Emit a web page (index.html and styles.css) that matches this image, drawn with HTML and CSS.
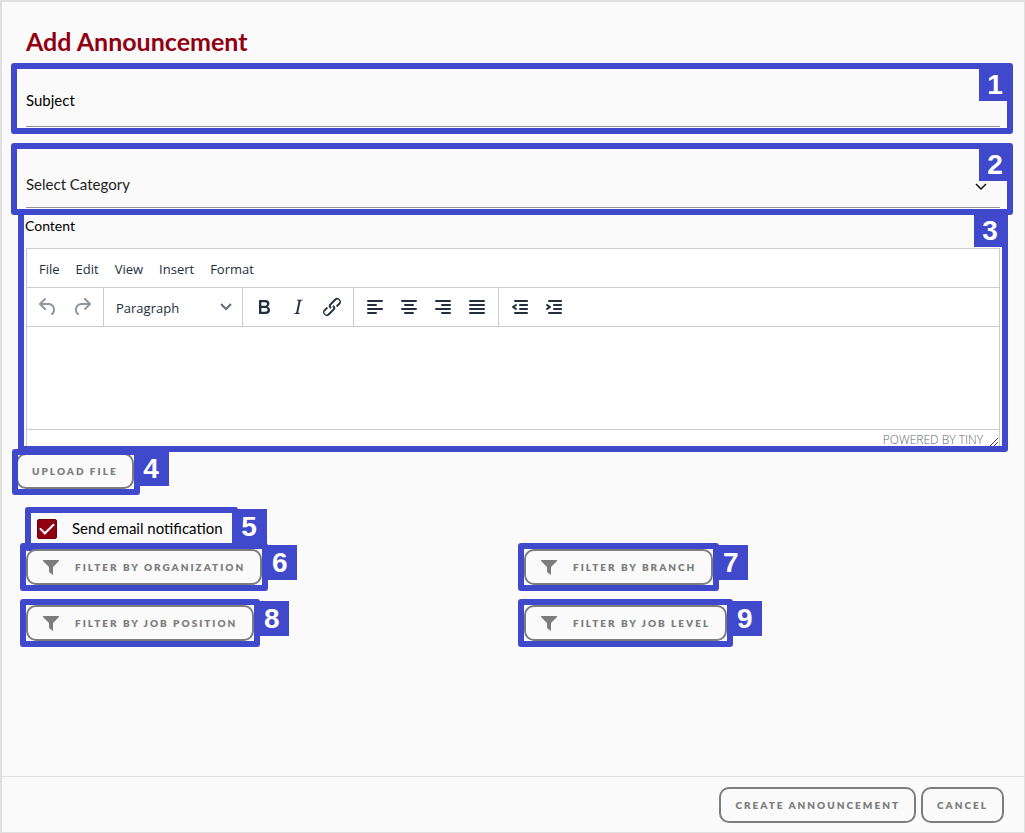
FILE: index.html
```html
<!DOCTYPE html>
<html lang="en">
<head>
<meta charset="utf-8">
<meta name="viewport" content="width=device-width, initial-scale=1">
<title>Add Announcement</title>
<link rel="stylesheet" href="styles.css">
</head>
<body>
<svg class="sprite" aria-hidden="true">
  <symbol id="funnel" viewBox="0 0 16 16"><path d="M0 1h16v1l-6 6v8l-4-3V8L0 2z"/></symbol>
</svg>
<form class="dialog">
  <main class="content">
    <h1 class="title">Add Announcement</h1>

    <div class="field subject">
      <input class="field-control" type="text" aria-label="Subject" placeholder="Subject">
      <span class="frame frame-subject"><b class="tag">1</b></span>
    </div>

    <div class="field category">
      <select class="field-control" aria-label="Select Category"><option>Select Category</option></select>
      <svg class="chevron" viewBox="0 0 12 8"><path d="M1 1l5 5 5-5"/></svg>
      <span class="frame frame-category"><b class="tag">2</b></span>
    </div>

    <section class="editor-section">
      <label class="editor-label" for="body">Content</label>
      <div class="editor">
        <div class="menubar">
          <button type="button">File</button>
          <button type="button">Edit</button>
          <button type="button">View</button>
          <button type="button">Insert</button>
          <button type="button">Format</button>
        </div>
        <div class="toolbar">
          <div class="group">
            <button type="button" class="tool" aria-label="Undo" disabled><svg viewBox="0 0 24 24"><path d="M6.4 8H12c3.7 0 6.2 2 6.8 5.1.6 2.7-.4 5.6-2.3 6.8a1 1 0 01-1-1.8c1.1-.6 1.8-2.7 1.4-4.6-.5-2.1-2.1-3.5-4.9-3.5H6.4l3.3 3.3a1 1 0 11-1.4 1.4l-5-5a1 1 0 010-1.4l5-5a1 1 0 011.4 1.4L6.4 8z"/></svg></button>
            <button type="button" class="tool" aria-label="Redo" disabled><svg viewBox="0 0 24 24"><path d="M17.6 10H12c-2.8 0-4.4 1.4-4.9 3.5-.4 2 .3 4 1.4 4.6a1 1 0 11-1 1.8c-2-1.2-2.9-4.1-2.3-6.8.6-3 3-5.1 6.8-5.1h5.6l-3.3-3.3a1 1 0 111.4-1.4l5 5a1 1 0 010 1.4l-5 5a1 1 0 01-1.4-1.4l3.3-3.3z"/></svg></button>
          </div>
          <div class="group">
            <div class="format">
              <select aria-label="Block format"><option>Paragraph</option></select>
              <svg class="chevron" viewBox="0 0 12 8"><path d="M1 1l5 5 5-5"/></svg>
            </div>
          </div>
          <div class="group">
            <button type="button" class="tool" aria-label="Bold"><svg viewBox="0 0 24 24"><path d="M7.8 19c-.3 0-.5 0-.6-.2l-.2-.5V5.7c0-.2 0-.4.2-.5l.6-.2h5c1.5 0 2.7.3 3.5 1 .7.6 1.1 1.4 1.1 2.5a3 3 0 01-.6 1.9c-.4.6-1 1-1.6 1.2.4.1.9.3 1.3.6s.8.7 1 1.2c.4.4.5 1 .5 1.6 0 1.3-.4 2.3-1.3 3-.8.7-2.1 1-3.8 1H7.8zm5-8.3c.6 0 1.2-.1 1.6-.5.4-.3.6-.7.6-1.3 0-1.1-.8-1.7-2.3-1.7H9.3v3.5h3.4zm.5 6c.7 0 1.3-.1 1.7-.4.4-.4.6-.9.6-1.5s-.2-1-.7-1.4c-.4-.3-1-.4-2-.4H9.4v3.8h4z"/></svg></button>
            <button type="button" class="tool" aria-label="Italic"><svg viewBox="0 0 24 24"><path d="M16.7 4.7l-.1.9h-.3c-.6 0-1 0-1.4.3-.3.3-.4.6-.5 1.1l-2.1 9.8v.6c0 .5.4.8 1.4.8h.2l-.2.8H8l.2-.8h.2c1.1 0 1.8-.5 2-1.5l2-9.8.1-.5c0-.6-.4-.8-1.4-.8h-.3l.2-.9h5.8z"/></svg></button>
            <button type="button" class="tool" aria-label="Link"><svg viewBox="0 0 24 24"><path d="M6.2 12.3a1 1 0 011.4 1.4l-2.1 2a2 2 0 102.7 2.8l4.8-4.8a1 1 0 000-1.4 1 1 0 111.4-1.3 2.9 2.9 0 010 4L9.6 20a3.9 3.9 0 01-5.5-5.5l2-2zm11.6-.6a1 1 0 01-1.4-1.4l2-2a2 2 0 10-2.6-2.8L11 10.3a1 1 0 000 1.4A1 1 0 119.6 13a2.9 2.9 0 010-4L14.4 4a3.9 3.9 0 015.5 5.5l-2 2z"/></svg></button>
          </div>
          <div class="group">
            <button type="button" class="tool lines" aria-label="Align left"><svg viewBox="0 0 24 24"><path d="M5 6h14M5 10h8M5 14h14M5 18h8"/></svg></button>
            <button type="button" class="tool lines" aria-label="Align center"><svg viewBox="0 0 24 24"><path d="M5 6h14M8 10h8M5 14h14M8 18h8"/></svg></button>
            <button type="button" class="tool lines" aria-label="Align right"><svg viewBox="0 0 24 24"><path d="M5 6h14M11 10h8M5 14h14M11 18h8"/></svg></button>
            <button type="button" class="tool lines" aria-label="Justify"><svg viewBox="0 0 24 24"><path d="M5 6h14M5 10h14M5 14h14M5 18h14"/></svg></button>
          </div>
          <div class="group">
            <button type="button" class="tool" aria-label="Outdent"><svg viewBox="0 0 24 24"><path d="M7 5h12c.6 0 1 .4 1 1s-.4 1-1 1H7a1 1 0 110-2zm5 4h7c.6 0 1 .4 1 1s-.4 1-1 1h-7a1 1 0 010-2zm0 4h7c.6 0 1 .4 1 1s-.4 1-1 1h-7a1 1 0 010-2zm-5 4h12a1 1 0 010 2H7a1 1 0 010-2zm1.6-3.8a1 1 0 01-1.2 1.6l-3-2a1 1 0 010-1.6l3-2a1 1 0 011.2 1.6L6.8 12l1.8 1.2z"/></svg></button>
            <button type="button" class="tool" aria-label="Indent"><svg viewBox="0 0 24 24"><path d="M7 5h12c.6 0 1 .4 1 1s-.4 1-1 1H7a1 1 0 110-2zm5 4h7c.6 0 1 .4 1 1s-.4 1-1 1h-7a1 1 0 010-2zm0 4h7c.6 0 1 .4 1 1s-.4 1-1 1h-7a1 1 0 010-2zm-5 4h12a1 1 0 010 2H7a1 1 0 010-2zm-.8-5l-1.8-1.2a1 1 0 011.2-1.6l3 2a1 1 0 010 1.6l-3 2a1 1 0 11-1.2-1.6z"/></svg></button>
          </div>
        </div>
        <textarea id="body" class="editor-body"></textarea>
        <div class="statusbar">
          <a href="#tiny">POWERED BY TINY</a>
          <svg class="grip" viewBox="0 0 10 10"><path d="M1 10l8-8M5 10l4-4"/></svg>
        </div>
      </div>
      <span class="frame frame-editor"><b class="tag">3</b></span>
    </section>

    <div class="upload marked">
      <button type="button" class="btn">UPLOAD FILE</button>
      <span class="frame"><b class="tag tag-side">4</b></span>
    </div>

    <div class="notify marked">
      <input type="checkbox" id="notify" checked>
      <label for="notify">Send email notification</label>
      <span class="frame"><b class="tag tag-side">5</b></span>
    </div>

    <div class="filters">
      <div class="marked">
        <button type="button" class="btn btn-filter"><svg><use href="#funnel"/></svg>FILTER BY ORGANIZATION</button>
        <span class="frame"><b class="tag tag-side">6</b></span>
      </div>
      <div class="marked">
        <button type="button" class="btn btn-filter"><svg><use href="#funnel"/></svg>FILTER BY BRANCH</button>
        <span class="frame"><b class="tag tag-side">7</b></span>
      </div>
      <div class="marked">
        <button type="button" class="btn btn-filter"><svg><use href="#funnel"/></svg>FILTER BY JOB POSITION</button>
        <span class="frame"><b class="tag tag-side">8</b></span>
      </div>
      <div class="marked">
        <button type="button" class="btn btn-filter"><svg><use href="#funnel"/></svg>FILTER BY JOB LEVEL</button>
        <span class="frame"><b class="tag tag-side">9</b></span>
      </div>
    </div>
  </main>
  <footer class="footer">
    <button type="submit" class="btn">CREATE ANNOUNCEMENT</button>
    <button type="button" class="btn">CANCEL</button>
  </footer>
</form>
</body>
</html>
```

FILE: styles.css
```css
* {
  box-sizing: border-box;
}

body {
  margin: 0;
  background: #fafafa;
  color: #000;
  font-family: Lato, "Liberation Sans", sans-serif;
  font-size: 15px;
}

button,
input,
select,
textarea {
  margin: 0;
  font: inherit;
  color: inherit;
}

.sprite {
  display: none;
}

.dialog {
  display: flex;
  flex-direction: column;
  min-height: 100vh;
  border: 2px solid #e0e0e0;
  border-right-width: 1px;
  border-bottom-width: 1px;
}

.content {
  flex: 1;
  padding: 24px;
}

.title {
  margin: 0 0 14px;
  color: #910012;
  font-size: 25px;
  font-weight: 700;
  line-height: 30px;
}

/* Form fields */
.field {
  position: relative;
  display: flex;
  align-items: center;
  border-bottom: 1px solid #949494;
}

.field-control {
  flex: 1;
  min-width: 0;
  padding: 19px 0 15px;
  border: 0;
  outline: 0;
  background: transparent;
  line-height: 22px;
  appearance: none;
}

.field-control::placeholder {
  color: #000;
  opacity: 1;
}

.category {
  margin-top: 23px;
}

.category .field-control {
  padding: 23px 0 12px;
  color: #222;
}

.chevron {
  width: 12px;
  height: 8px;
  fill: none;
  stroke: #222f3e;
  stroke-width: 2;
  pointer-events: none;
}

.category .chevron {
  margin: 16px 13px 0 0;
  stroke: #111;
  stroke-width: 1.5;
}

/* Rich text editor */
.editor-section {
  position: relative;
  margin-top: 7px;
}

.editor-label {
  display: block;
  margin: 0 0 11px -1px;
  font-size: 14px;
  line-height: 22px;
}

.editor {
  border: 1px solid #ccc;
  background: #fff;
  color: #222f3e;
  font-family: "Open Sans", "Noto Sans", sans-serif;
  font-size: 13px;
}

.menubar {
  display: flex;
  gap: 16px;
  padding: 9px 12px 7px;
  border-bottom: 1px solid #ccc;
}

.menubar button {
  padding: 0;
  border: 0;
  background: none;
  line-height: 22px;
}

.toolbar {
  display: flex;
  border-bottom: 1px solid #ccc;
}

.group {
  display: flex;
  align-items: center;
  height: 38px;
  padding: 0 4px;
  border-right: 1px solid #ccc;
}

.group:last-child {
  border-right: 0;
}

.tool {
  display: grid;
  place-items: center;
  width: 34px;
  height: 34px;
  padding: 0;
  border: 0;
  background: none;
}

.tool svg {
  width: 24px;
  height: 24px;
  fill: #222f3e;
}

.tool:disabled svg {
  opacity: 0.5;
}

.lines svg {
  stroke: #222f3e;
  stroke-width: 2;
  stroke-linecap: round;
}

.format {
  display: flex;
  align-items: center;
  width: 130px;
  padding: 0 6px 0 8px;
}

.format select {
  flex: 1;
  min-width: 0;
  padding: 2px 0 0;
  border: 0;
  background: none;
  appearance: none;
}

.format .chevron {
  opacity: 0.7;
}

.editor-body {
  display: block;
  width: 100%;
  height: 102px;
  padding: 12px;
  border: 0;
  outline: 0;
  resize: none;
}

.statusbar {
  display: flex;
  align-items: center;
  justify-content: flex-end;
  gap: 6px;
  height: 20px;
  border-top: 1px solid #ccc;
}

.statusbar a {
  color: #5f6872;
  font-size: 12px;
  font-weight: 300;
  line-height: 18px;
  text-decoration: none;
}

.grip {
  width: 10px;
  height: 10px;
  margin-top: 2px;
  stroke: #444;
}

/* Buttons */
.btn {
  display: flex;
  align-items: center;
  height: 36px;
  padding: 0 14px;
  border: 2px solid #7d7d7d;
  border-radius: 10px;
  background: #fafafa;
  color: #7d7d7d;
  font-size: 10px;
  font-weight: 800;
  letter-spacing: 2px;
  white-space: nowrap;
}

.btn-filter {
  gap: 16px;
  padding: 0 15px;
}

.btn-filter svg {
  width: 16px;
  height: 16px;
  fill: #7d7d7d;
}

.marked {
  position: relative;
  width: fit-content;
}

.upload {
  margin: 3px 0 0 -10px;
}

.notify {
  display: flex;
  align-items: center;
  gap: 15px;
  height: 32px;
  margin: 24px 0 4px 5px;
  padding: 0 9px 0 6px;
}

.notify label {
  align-self: flex-start;
  line-height: 30px;
}

.notify input {
  display: grid;
  place-items: center;
  width: 20px;
  height: 20px;
  border: 1px solid #6d000d;
  border-radius: 2px;
  background: #910012;
  appearance: none;
}

.notify input:checked::before {
  content: "";
  width: 12px;
  height: 6px;
  margin-bottom: 4px;
  border: solid #fff;
  border-width: 0 0 2px 2px;
  transform: rotate(-45deg);
}

.filters {
  display: grid;
  grid-template-columns: 1fr 1fr;
  gap: 20px 22px;
}

/* Numbered callouts drawn over the form */
.frame {
  position: absolute;
  inset: -6px;
  border: 6px solid #4048cc;
  border-radius: 3px;
  pointer-events: none;
}

.frame-subject,
.frame-category {
  inset: -7px -13px -8px -15px;
}

.frame-editor {
  inset: -6px -8px -2px;
}

.upload .frame {
  inset: -4px -6px -6px -4px;
}

.tag {
  position: absolute;
  top: 0;
  right: -4px;
  width: 32px;
  height: 32px;
  background: #4048cc;
  color: #fff;
  font-family: "Liberation Sans", Arial, sans-serif;
  font-size: 28px;
  line-height: 32px;
  text-align: center;
}

.tag-side {
  top: -4px;
  right: auto;
  left: 100%;
  width: 35px;
  height: 35px;
  line-height: 36px;
}

.footer {
  display: flex;
  justify-content: flex-end;
  gap: 5px;
  padding: 10px 20px 9px;
  border-top: 1px solid #e0e0e0;
}
```
